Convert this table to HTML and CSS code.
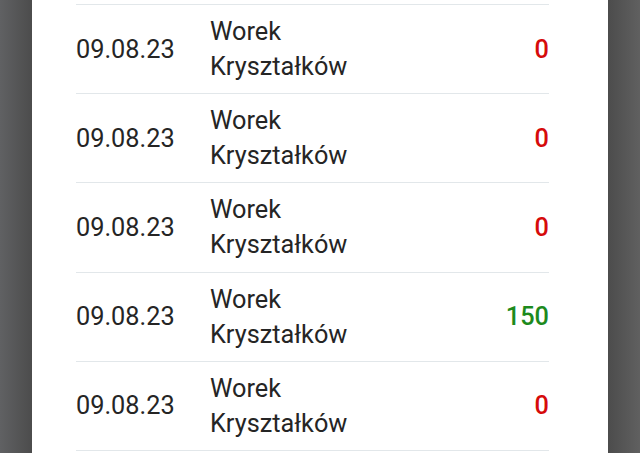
FILE: index.html
```html
<!DOCTYPE html>
<html lang="pl">
<head>
<meta charset="utf-8">
<link rel="stylesheet" href="styles.css">
</head>
<body>
<main class="card">
  <ul class="list">
    <li class="row"><span class="date">09.08.23</span><span class="desc">Worek<br>Kryształków</span><span class="amount neg">0</span></li>
    <li class="row"><span class="date">09.08.23</span><span class="desc">Worek<br>Kryształków</span><span class="amount neg">0</span></li>
    <li class="row"><span class="date">09.08.23</span><span class="desc">Worek<br>Kryształków</span><span class="amount neg">0</span></li>
    <li class="row"><span class="date">09.08.23</span><span class="desc">Worek<br>Kryształków</span><span class="amount pos">150</span></li>
    <li class="row"><span class="date">09.08.23</span><span class="desc">Worek<br>Kryształków</span><span class="amount neg">0</span></li>
    <li class="row end"></li>
  </ul>
</main>
</body>
</html>
```

FILE: styles.css
```css
html, body {
  margin: 0;
  height: 100%;
}
body {
  background: linear-gradient(to right, #606163 0, #4c4c4c 32px, #4c4c4c 608px, #606060 640px);
  font-family: Roboto, "Liberation Sans", sans-serif;
  overflow: hidden;
  display: flex;
  justify-content: center;
}
.card {
  width: 576px;
  height: 100%;
  background: #ffffff;
  padding: 4px 59px 0 44px;
  box-sizing: border-box;
}
.list {
  list-style: none;
  margin: 0;
  padding: 0;
}
.row {
  height: 88.2px;
  border-top: 1px solid #e2e7ea;
  display: flex;
  align-items: center;
  color: #252525;
  font-size: 25.3px;
}
.row.end {
  height: 3px;
}
.date {
  width: 134px;
}
.desc {
  flex: 1;
  line-height: 35px;
}
.amount {
  font-weight: 500;
  text-align: right;
}
.neg { color: #d60b0b; }
.pos { color: #1d8a1d; }
```
